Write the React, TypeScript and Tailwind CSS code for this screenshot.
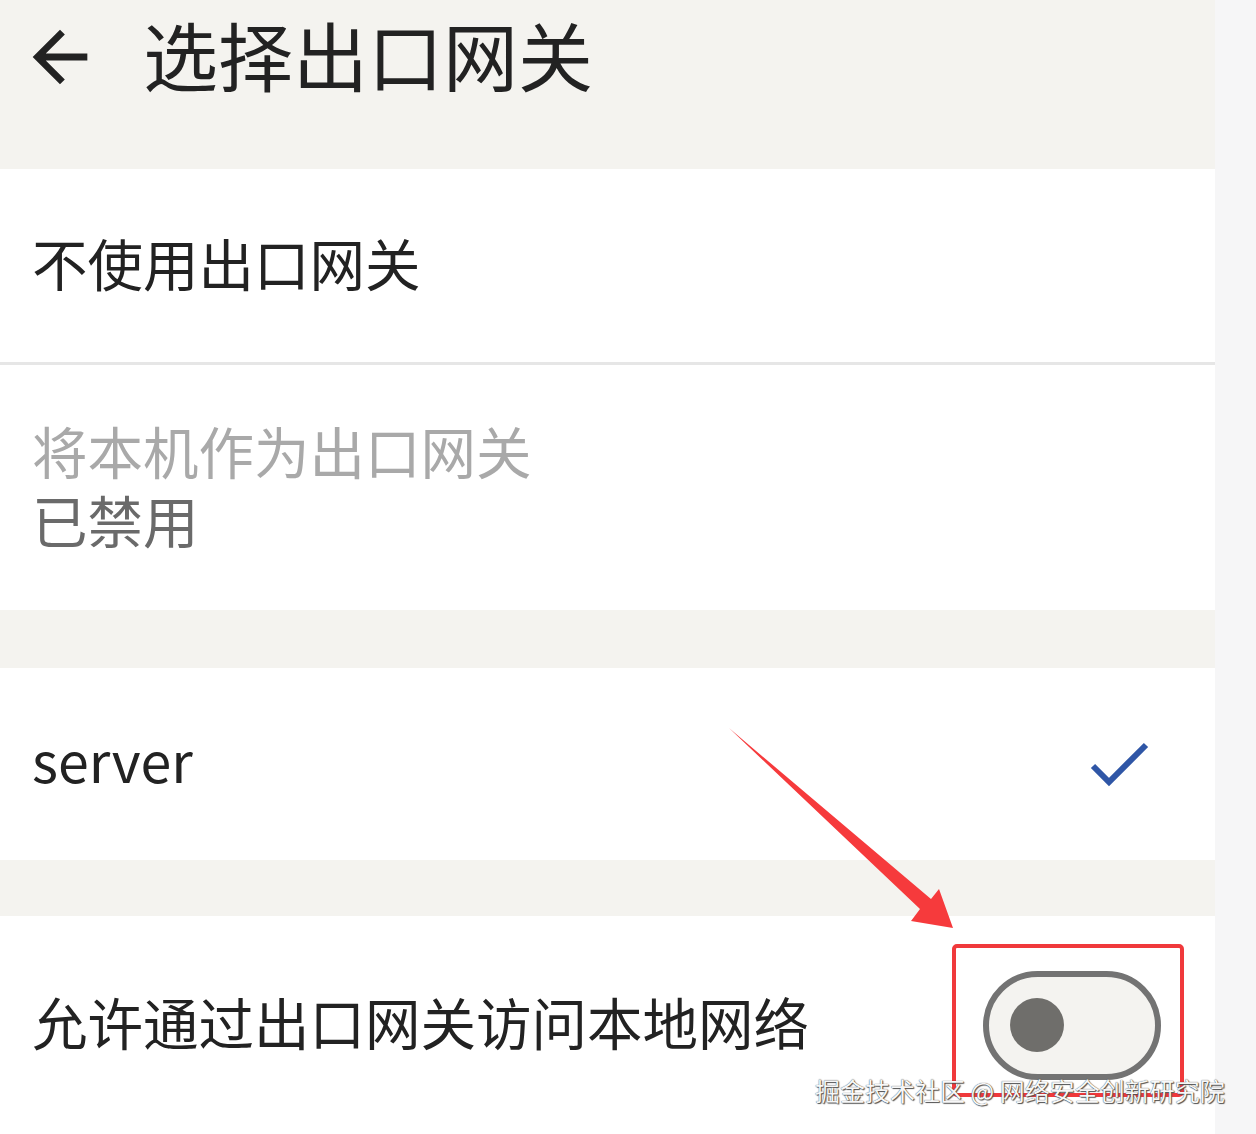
import React from "react";

const BackIcon = () => (
  <svg width="82" height="82" viewBox="0 0 24 24" fill="#222">
    <path d="M20 11H7.83l5.59-5.59L12 4l-8 8 8 8 1.41-1.41L7.83 13H20v-2z" />
  </svg>
);

const CheckIcon = () => (
  <svg width="70" height="60" viewBox="0 0 70 60" fill="none">
    <path d="M4 25 L20 41 L57 4" stroke="#2f56a6" strokeWidth="6" />
  </svg>
);

const Toggle = () => (
  <div className="flex items-center w-[178px] h-[109px] rounded-full border-[6px] border-[#737373] bg-[#f4f3f0] pl-[21px]">
    <div className="w-[54px] h-[54px] rounded-full bg-[#6f6e6b]"></div>
  </div>
);

const Gap = ({ h }: { h: string }) => <div className={`${h} bg-[#f4f3ef]`}></div>;

export default function App() {
  return (
    <div className="relative flex w-[1256px] h-[1134px] overflow-hidden bg-white font-['Noto_Sans_CJK_SC','Noto_Sans',sans-serif] text-[#222]">
      <div className="flex flex-col w-[1215px]">
        {/* header */}
        <div className="h-[169px] bg-[#f4f3ef]">
          <div className="flex items-center h-[116px]">
            <div className="ml-[19px] mt-[-2px]">
              <BackIcon />
            </div>
            <div className="ml-[42px] mt-[-10px] text-[75px] leading-none">选择出口网关</div>
          </div>
        </div>

        <div className="flex items-center h-[193px] pl-[32px] pb-[6px] text-[55.5px] leading-none">不使用出口网关</div>
        <div className="h-[3px] bg-[#e6e6e6]"></div>
        <div className="flex flex-col justify-center h-[245px] pl-[32px] pb-[6px] text-[55.5px] leading-[69px]">
          <div className="h-[69px] text-[#a9a9a9]">将本机作为出口网关</div>
          <div className="h-[69px] text-[#6a6a6a]">已禁用</div>
        </div>

        <Gap h="h-[58px]" />

        <div className="flex items-center justify-between h-[192px] pl-[32px] pr-[56px]">
          <div className="text-[55.5px] leading-none pb-[8px]">server</div>
          <div className="mt-[14px]">
            <CheckIcon />
          </div>
        </div>

        <Gap h="h-[56px]" />

        <div className="flex items-center justify-between h-[218px] pl-[32px] pr-[54px]">
          <div className="text-[55.5px] leading-none pb-[6px]">允许通过出口网关访问本地网络</div>
          <Toggle />
        </div>
      </div>
      <div className="flex-1 bg-[#f6f6f7]"></div>

      {/* annotations */}
      <svg className="absolute left-0 top-0" width="1256" height="1134" viewBox="0 0 1256 1134">
        <polygon points="729,728 931,899 939,889 953,928 911,921 920,909" fill="#f63a3c" />
      </svg>
      <div className="absolute left-[952px] top-[944px] w-[232px] h-[153px] border-[4px] border-[#f0393b] rounded-[5px]"></div>
      <div className="absolute left-[815px] top-[1075px] text-[25px] leading-[30px] text-[#f7f7f7] [text-shadow:0_0_1px_#222,1px_1px_1px_#555]">
        掘金技术社区 @ 网络安全创新研究院
      </div>
    </div>
  );
}
